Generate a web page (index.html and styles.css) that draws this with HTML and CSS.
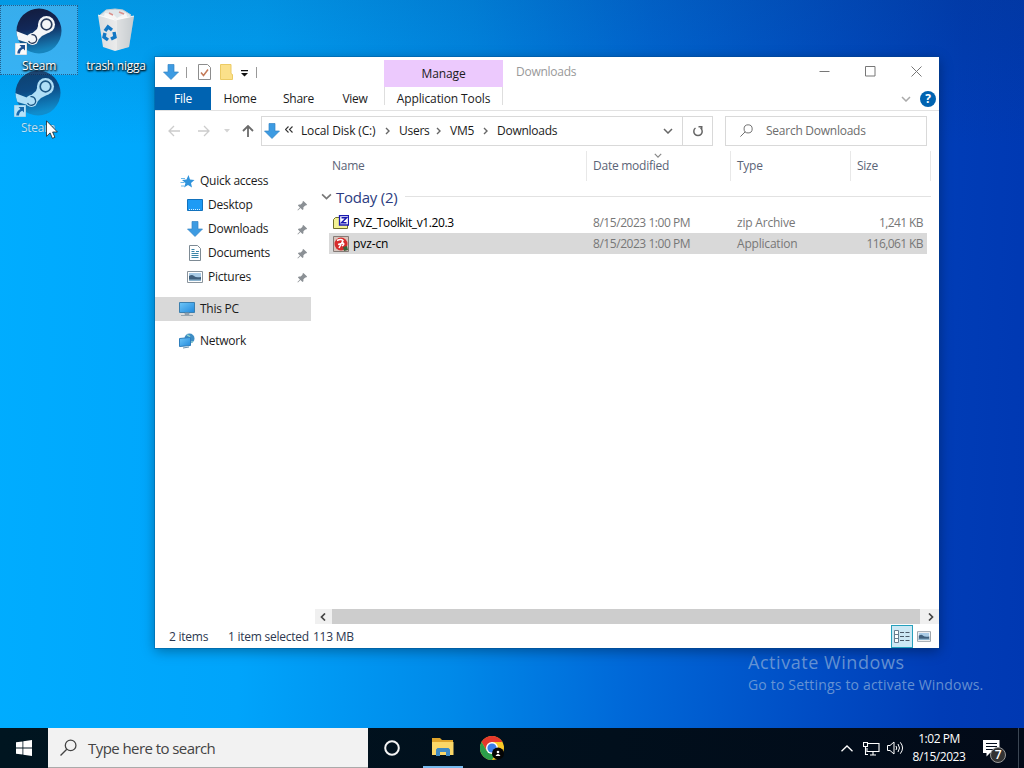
FILE: index.html
```html
<!DOCTYPE html>
<html lang="en">
<head>
    <meta charset="UTF-8">
    <meta name="viewport" content="width=device-width, initial-scale=1.0">
    <title>Desktop</title>
    <link rel="stylesheet" href="styles.css">
</head>
<body>

    <!-- Shared icons -->
    <svg class="defs">
        <defs>
            <linearGradient id="steam-bg" x1="0" y1="0" x2="0.2" y2="1">
                <stop offset="0" stop-color="#131a3a"/>
                <stop offset="0.5" stop-color="#12295a"/>
                <stop offset="1" stop-color="#1684bd"/>
            </linearGradient>
            <linearGradient id="blue" x1="0" y1="0" x2="1" y2="1">
                <stop offset="0" stop-color="#6ec6f8"/>
                <stop offset="1" stop-color="#2289dc"/>
            </linearGradient>
            <linearGradient id="bin" x1="0" y1="0" x2="1" y2="0">
                <stop offset="0" stop-color="#d9dcdf"/>
                <stop offset="0.55" stop-color="#ececec"/>
                <stop offset="1" stop-color="#bcc3c9"/>
            </linearGradient>
        </defs>
        <symbol id="steam" viewBox="0 0 48 48">
            <clipPath id="disc"><circle cx="24" cy="24" r="22.500"/></clipPath>
            <circle cx="24" cy="24" r="22.500" fill="url(#steam-bg)"/>
            <g clip-path="url(#disc)">
                <path d="M0 23.500L14 29l8-7 2-6 11 9-8 4-5 5-5 3L0 32z" fill="#f4f6f8"/>
                <circle cx="31.500" cy="17.500" r="8.500" fill="#f4f6f8"/>
                <circle cx="17.500" cy="32" r="6" fill="#f4f6f8"/>
                <circle cx="31.500" cy="17.500" r="5.300" fill="none" stroke="#2a3c5c" stroke-width="1.700"/>
                <path d="M13.500 34a4.300 4.300 0 1 0 3-6.300" fill="none" stroke="#2a3c5c" stroke-width="1.300"/>
            </g>
        </symbol>
        <symbol id="shortcut" viewBox="0 0 12 12">
            <path d="M0 0h12v12H0z" fill="#fbfbfb" stroke="#9ab" stroke-width=".6"/>
            <path d="M4.500 2H10v5.500L8.300 5.700Q5 7 5 10.500H2.300Q2.300 6 6.400 3.900z" fill="#20508f"/>
        </symbol>
        <symbol id="down" viewBox="0 0 16 16">
            <path d="M5 .5h6V8h4.500L8 15.500.5 8H5z" fill="#3d9be2" stroke="#3584c4" stroke-width=".7"/>
        </symbol>
        <symbol id="pin" viewBox="0 0 12 12">
            <path d="M7 1l4 4-1 1h-1L7 8v2L6 11 3.800 8.700 1 11.500l-.5-.5 2.700-2.800L1 6l1-1h2l2-2V2z" fill="#8b9095"/>
        </symbol>
        <symbol id="picture" viewBox="0 0 16 12">
            <path d="M.5.5h15v11H.5z" fill="#fff" stroke="#8a949c"/>
            <path d="M2 2h12v8H2z" fill="#a9cbe6"/>
            <path d="M2 5q3-2 5 0t7 1v4H2z" fill="#3f5f7c"/>
            <path d="M2 8.500h12V10H2z" fill="#8db4cf"/>
        </symbol>
        <symbol id="chevron" viewBox="0 0 10 6">
            <path d="M1 1l4 4 4-4" fill="none" stroke="currentColor" stroke-width="1.500"/>
        </symbol>
        <symbol id="glass" viewBox="0 0 16 16">
            <circle cx="10" cy="6" r="5" fill="none" stroke="currentColor" stroke-width="1.200"/>
            <path d="M6.400 9.600L.5 15.500" stroke="currentColor" stroke-width="1.200"/>
        </symbol>
    </svg>

    <section class="desktop">

        <div class="shortcut selected">
            <div class="picture">
                <svg width="48" height="48"><use href="#steam"/></svg>
                <svg class="link" width="12" height="12"><use href="#shortcut"/></svg>
            </div>
            <p>Steam</p>
        </div>

        <div class="shortcut trash">
            <div class="picture">
                <svg width="48" height="48" viewBox="0 0 48 48">
                    <path d="M7 9L14 3l9-1 8 1 8 5-4 6H10z" fill="#dfe6ea" stroke="#c3ccd2"/>
                    <path d="M13 6l8 1 4 4 9-5 2 6H11z" fill="#f6f6f6"/>
                    <path d="M17 6l4 2M27 5l5 2" stroke="#d9918d" stroke-width="1.500"/>
                    <path d="M6 8l17 5 19-4-5 31-14 4-12-4z" fill="url(#bin)"/>
                    <path d="M25 13l17-4-5 31-12 3z" fill="#cfd3d6" opacity=".5"/>
                    <path d="M6 8l17 5 19-4" fill="none" stroke="#fff" stroke-width=".8"/>
                    <g fill="none" stroke="#1478c4" stroke-width="3.400">
                        <path d="M13 24l3-4 4 3"/>
                        <path d="M22 25l1 5-4 2"/>
                        <path d="M16 33l-4-3 1-4"/>
                    </g>
                </svg>
            </div>
            <p>trash nigga</p>
        </div>

        <div class="shortcut ghost">
            <div class="picture">
                <svg width="48" height="48"><use href="#steam"/></svg>
                <svg class="link" width="12" height="12"><use href="#shortcut"/></svg>
            </div>
            <p>Steam</p>
        </div>

        <div class="watermark">
            <h2>Activate Windows</h2>
            <p>Go to Settings to activate Windows.</p>
        </div>

        <div class="window">

            <div class="ribbon">
                <div class="left">
                    <div class="quick">
                        <svg width="16" height="16"><use href="#down"/></svg>
                        <i class="sep"></i>
                        <svg class="check" width="13" height="16" viewBox="0 0 13 16">
                            <path d="M.5.5h9l3 3v12H.5z" fill="#fff" stroke="#8d8d8d"/>
                            <path d="M3 8.500l2.500 3L10 5.500" fill="none" stroke="#c47a58" stroke-width="1.500"/>
                        </svg>
                        <svg class="folder" width="13" height="16" viewBox="0 0 13 16">
                            <path d="M.5.5H11v9l1.500 1v5H.5z" fill="#fbe08a" stroke="#eccb64"/>
                        </svg>
                        <svg class="more" width="7" height="7" viewBox="0 0 7 7"><path d="M0 0h7v1.300H0zM0 3h7L3.500 6.500z" fill="#111"/></svg>
                        <i class="sep"></i>
                    </div>
                    <ul class="tabs">
                        <li class="file">File</li>
                        <li class="home">Home</li>
                        <li class="share">Share</li>
                        <li class="view">View</li>
                    </ul>
                </div>
                <div class="manage">
                    <p class="top">Manage</p>
                    <p class="bottom">Application Tools</p>
                </div>
                <p class="title">Downloads</p>
                <div class="right">
                    <div class="controls">
                        <svg width="11" height="11" viewBox="0 0 11 11"><path d="M.5 5.500h10" stroke="#777"/></svg>
                        <svg width="11" height="11" viewBox="0 0 11 11"><path d="M.5.5h9.500v9.500H.5z" fill="none" stroke="#777"/></svg>
                        <svg width="11" height="11" viewBox="0 0 11 11"><path d="M.5.5l10 10M10.500.5l-10 10" stroke="#777"/></svg>
                    </div>
                    <div class="help">
                        <svg width="10" height="6"><use href="#chevron"/></svg>
                        <span>?</span>
                    </div>
                </div>
            </div>

            <div class="nav">
                <div class="arrows">
                    <svg width="12" height="12" viewBox="0 0 12 12"><path d="M12 6H1M6 1L1 6l5 5" fill="none" stroke="#ccc" stroke-width="1.300"/></svg>
                    <svg width="12" height="12" viewBox="0 0 12 12"><path d="M0 6h11M6 1l5 5-5 5" fill="none" stroke="#ccc" stroke-width="1.300"/></svg>
                    <svg class="small" width="6" height="4" viewBox="0 0 6 4"><path d="M0 0l3 3.500L6 0z" fill="#d4d4d4"/></svg>
                    <svg width="12" height="12" viewBox="0 0 12 12"><path d="M6 12V1M1 6l5-5 5 5" fill="none" stroke="#6b6b6b" stroke-width="1.800"/></svg>
                </div>
                <div class="address">
                    <svg width="16" height="16"><use href="#down"/></svg>
                    <svg class="double" width="8" height="7" viewBox="0 0 8 7"><path d="M3.500.5l-3 3 3 3M7.500.5l-3 3 3 3" fill="none" stroke="#333" stroke-width="1.100"/></svg>
                    <span class="disk">Local Disk (C:)</span>
                    <svg class="next" width="5" height="8" viewBox="0 0 5 8"><path d="M1 1l3 3-3 3" fill="none" stroke="#666" stroke-width="1.400"/></svg>
                    <span class="users">Users</span>
                    <svg class="next" width="5" height="8" viewBox="0 0 5 8"><path d="M1 1l3 3-3 3" fill="none" stroke="#666" stroke-width="1.400"/></svg>
                    <span class="vm">VM5</span>
                    <svg class="next" width="5" height="8" viewBox="0 0 5 8"><path d="M1 1l3 3-3 3" fill="none" stroke="#666" stroke-width="1.400"/></svg>
                    <span class="here">Downloads</span>
                    <svg class="drop" width="10" height="6"><use href="#chevron"/></svg>
                    <div class="refresh">
                        <svg width="12" height="12" viewBox="0 0 12 12"><path d="M8.500 3A4.200 4.200 0 1 1 3.500 3M1.500 1.800h4M2.300 1v4" fill="none" stroke="#666" stroke-width="1.500"/></svg>
                    </div>
                </div>
                <div class="search">
                    <svg width="13" height="13"><use href="#glass" width="13" height="13"/></svg>
                    <span>Search Downloads</span>
                </div>
            </div>

            <div class="content">
                <ul class="side">
                    <li>
                        <svg width="16" height="16" viewBox="0 0 16 16"><path d="M9.500 2L11 6.500l4.500.5-3.500 3 1 4.500-4-2.500-4 2.500 1.500-4.500L3 7l4.500-.5z" fill="#2f93dc"/><path d="M2 5.500h4M1.500 9.500h4M2 13h3" stroke="#6cb8ea"/></svg>
                        <span>Quick access</span>
                    </li>
                    <li class="sub">
                        <svg width="16" height="16" viewBox="0 0 16 16"><path d="M.5 2.500h15v11H.5z" fill="#1d9bf5" stroke="#1272bd"/><path d="M2 12.500h12" stroke="#d8efff" stroke-dasharray="1 1"/></svg>
                        <span>Desktop</span>
                        <svg class="pin" width="11" height="11"><use href="#pin"/></svg>
                    </li>
                    <li class="sub">
                        <svg width="16" height="16"><use href="#down"/></svg>
                        <span>Downloads</span>
                        <svg class="pin" width="11" height="11"><use href="#pin"/></svg>
                    </li>
                    <li class="sub">
                        <svg width="16" height="16" viewBox="0 0 16 16"><path d="M2.500.5h8l3 3v12h-11z" fill="#fff" stroke="#7d8a94"/><path d="M4.500 4.500h3M4.500 6.500h3M4.500 8.500h7M4.500 10.500h7M4.500 12.500h7M9 6.500h3" stroke="#3c85a8"/></svg>
                        <span>Documents</span>
                        <svg class="pin" width="11" height="11"><use href="#pin"/></svg>
                    </li>
                    <li class="sub">
                        <svg width="16" height="12"><use href="#picture"/></svg>
                        <span>Pictures</span>
                        <svg class="pin" width="11" height="11"><use href="#pin"/></svg>
                    </li>
                    <li class="gap active">
                        <svg width="16" height="16" viewBox="0 0 16 16"><path d="M.5 1.500h15v10H.5z" fill="url(#blue)" stroke="#3c7fae"/><path d="M6 12h4v1.500H6zM2 14.500h12" fill="#9ab" stroke="#8797a3" stroke-width=".8"/></svg>
                        <span>This PC</span>
                    </li>
                    <li class="gap">
                        <svg width="16" height="16" viewBox="0 0 16 16"><circle cx="10.500" cy="5.500" r="5" fill="#3e8dc4"/><path d="M8 2q4 1 2 4t4 3" fill="none" stroke="#8ed0ce" stroke-width="1.500"/><path d="M.5 5.500l11-1v8l-11 1z" fill="url(#blue)" stroke="#2f7ebc"/><path d="M4 15l6-1" stroke="#6b8fa8"/></svg>
                        <span>Network</span>
                    </li>
                </ul>

                <div class="files">
                    <div class="head">
                        <p>Name</p>
                        <p>Date modified <svg width="8" height="5"><use href="#chevron"/></svg></p>
                        <p>Type</p>
                        <p>Size</p>
                    </div>
                    <div class="group">
                        <svg width="11" height="7"><use href="#chevron"/></svg>
                        <span>Today (2)</span>
                    </div>
                    <div class="row">
                        <svg width="16" height="16" viewBox="0 0 16 16">
                            <path d="M.5 4.500l2-2h4l1 2h7v9H.5z" fill="#f4f294" stroke="#6f6f2c"/>
                            <path d="M6.500.5h9v9.500h-9z" fill="#fff" stroke="#1a1ab0" stroke-width="1.300"/>
                            <path d="M8.500 2.700h5l-5 5h5" fill="none" stroke="#1a1ab0" stroke-width="1.500"/>
                        </svg>
                        <span class="name">PvZ_Toolkit_v1.20.3</span>
                        <span class="date">8/15/2023 1:00 PM</span>
                        <span class="type">zip Archive</span>
                        <span class="size">1,241 KB</span>
                    </div>
                    <div class="row selected">
                        <svg width="16" height="16" viewBox="0 0 16 16">
                            <path d="M.5.5h15v15H.5z" fill="#d9c3bb" stroke="#857b77"/>
                            <circle cx="8" cy="8" r="6.500" fill="#d62b2b"/>
                            <path d="M4 4.500q4-2 6 0L6 12M5 8.500l5-1.500q2 1-1 3" fill="none" stroke="#fff" stroke-width="1.500"/>
                            <path d="M10 11l4-1 1 4-4 1z" fill="#37633a"/>
                        </svg>
                        <span class="name">pvz-cn</span>
                        <span class="date">8/15/2023 1:00 PM</span>
                        <span class="type">Application</span>
                        <span class="size">116,061 KB</span>
                    </div>
                    <div class="scroll">
                        <svg width="6" height="8" viewBox="0 0 6 8"><path d="M5 .5L1.500 4 5 7.500" fill="none" stroke="#444" stroke-width="1.700"/></svg>
                        <div class="thumb"></div>
                        <svg width="6" height="8" viewBox="0 0 6 8"><path d="M1 .5L4.500 4 1 7.500" fill="none" stroke="#444" stroke-width="1.700"/></svg>
                    </div>
                </div>
            </div>

            <div class="status">
                <span class="items">2 items</span>
                <span class="count">1 item selected</span>
                <span class="total">113 MB</span>
                <div class="details">
                    <svg width="16" height="13" viewBox="0 0 16 13"><path d="M.5.5h4v12h-4zM.5 4.500h4M.5 8.500h4" fill="#fff" stroke="#6b7e91"/><path d="M6 2.500h10M6 6.500h10M6 10.500h10" stroke="#4b5a68" stroke-dasharray="4 1.500"/></svg>
                </div>
                <svg class="large" width="14" height="11"><use href="#picture" width="14" height="11"/></svg>
            </div>
        </div>

        <svg class="cursor" width="12" height="19" viewBox="0 0 12 19">
            <path d="M.5.8v15.500l3.600-3.400 2.300 5.400 2.500-1-2.300-5.300h4.800z" fill="#fff" stroke="#222" stroke-width=".8"/>
        </svg>
    </section>

    <section class="taskbar">
        <div class="start">
            <svg width="16" height="16" viewBox="0 0 16 16"><path d="M0 2.300l6.500-.9v6.200H0zM7.300 1.200L16 0v7.600H7.300zM0 8.400h6.500v6.200L0 13.700zM7.300 8.400H16V16l-8.700-1.200z" fill="#fff"/></svg>
        </div>
        <div class="find">
            <svg width="17" height="17"><use href="#glass"/></svg>
            <span>Type here to search</span>
        </div>
        <div class="app">
            <svg width="16" height="16" viewBox="0 0 16 16"><circle cx="8" cy="8" r="6.800" fill="none" stroke="#f4f4f4" stroke-width="2"/></svg>
        </div>
        <div class="app open">
            <svg width="22" height="18" viewBox="0 0 22 18">
                <path d="M0 0h8l2 2h11v5H0z" fill="#e0a52c"/>
                <path d="M0 4h21.500v13H0z" fill="#fbd768"/>
                <path d="M4 18v-6.500L5.500 10h11l1.500 1.500V18h-4v-4H8v4z" fill="#3f8ac4"/>
            </svg>
        </div>
        <div class="app chrome">
            <svg width="24" height="24" viewBox="0 0 24 24">
                <circle cx="12" cy="12" r="12" fill="#fbc926"/>
                <path d="M12 6h10.400a12 12 0 0 0-20.800 0L7 15z" fill="#e5382c"/>
                <path d="M1.600 6A12 12 0 0 0 12 24l5.200-9H6.800z" fill="#2c9e4b"/>
                <circle cx="12" cy="12" r="6" fill="#fff"/>
                <circle cx="12" cy="12" r="4.600" fill="#3a7ee8"/>
                <circle cx="18" cy="17.500" r="6" fill="#050505"/>
                <circle cx="18" cy="16" r="1.300" fill="#fff"/>
                <path d="M15.500 20q2.500-4 5 0z" fill="#fff"/>
            </svg>
        </div>
        <div class="tray">
            <svg width="12" height="7" viewBox="0 0 12 7"><path d="M.5 6.300L6 1l5.500 5.300" fill="none" stroke="#fff" stroke-width="1.300"/></svg>
            <svg class="net" width="17" height="15" viewBox="0 0 17 15"><path d="M5 2.500h11v8H4V7M10 10.500V14M7 14h6M.5 1.500h4v4h-4zM2.500 5.500v8H5" fill="none" stroke="#fff" stroke-width="1.100"/></svg>
            <svg class="sound" width="17" height="14" viewBox="0 0 17 14"><path d="M.5 4.500h2.500L7 1v12L3 9.500H.5z" fill="none" stroke="#fff"/><path d="M9 5q1.500 2 0 4M11 3q3 4 0 8M13.300 1.300q4.500 5.700 0 11.400" fill="none" stroke="#fff"/></svg>
            <div class="clock">
                <p>1:02 PM</p>
                <p>8/15/2023</p>
            </div>
            <div class="notes">
                <svg width="17" height="17" viewBox="0 0 17 17"><path d="M0 0h16.500v13H7l-3.500 3.500V13H0z" fill="#fff"/><path d="M3 3.500h11M3 6.500h11M3 9.500h7" stroke="#020c1c"/></svg>
                <span>7</span>
            </div>
        </div>
    </section>

</body>
</html>
```
FILE: styles.css
```css
* {
    margin: 0;
    padding: 0;
    box-sizing: border-box;
}

body {
    width: 1024px;
    height: 768px;
    overflow: hidden;
    font-family: "Open Sans", "Noto Sans", sans-serif;
    font-size: 12px;
    letter-spacing: -.25px;
    color: #1b1b1b;
}

ul {
    list-style: none;
}

svg {
    flex: none;
    display: block;
}

span, p, li {
    white-space: nowrap;
}

.defs {
    position: absolute;
    width: 0;
    height: 0;
}

/* Desktop */

.desktop {
    position: relative;
    height: 728px;
    background: linear-gradient(rgba(10, 50, 90, .16), transparent 20%),
        linear-gradient(92deg, #00adff 0%, #00a4fb 25%, #008ae9 45%, #0068d8 62%, #004cc4 80%, #003cb6 92%, #0038b2 100%);
}

.shortcut {
    position: absolute;
    left: 0;
    top: 5px;
    width: 78px;
    height: 70px;
    padding-top: 2px;
    color: white;
    text-align: center;
    text-shadow: 0 1px 2px #000, 1px 1px 2px #000;
}

.shortcut .picture {
    position: relative;
    width: 48px;
    height: 48px;
    margin: 0 auto;
}

.shortcut .link {
    position: absolute;
    left: 0;
    bottom: 0;
}

.shortcut p {
    margin-top: 3px;
    line-height: 16px;
}

.shortcut.selected {
    background-color: rgba(130, 200, 245, .42);
    border: dotted 1px #245f8d;
    padding-top: 1px;
}

.shortcut.trash {
    left: 77px;
}

.shortcut.ghost {
    left: -1px;
    top: 67px;
    opacity: .72;
    text-shadow: 0 0 1px #235;
}

.cursor {
    position: absolute;
    left: 46px;
    top: 120px;
}

.watermark {
    position: absolute;
    left: 748px;
    top: 650px;
    color: #7ea4d8;
    opacity: .8;
}

.watermark h2 {
    font-size: 18px;
    font-weight: normal;
    line-height: 24px;
    letter-spacing: .55px;
}

.watermark p {
    font-size: 14px;
    line-height: 21px;
    letter-spacing: .17px;
}

/* Explorer window */

.window {
    position: absolute;
    left: 155px;
    top: 57px;
    width: 784px;
    height: 591px;
    display: flex;
    flex-direction: column;
    background-color: white;
    box-shadow: 0 0 0 1px rgba(0, 70, 130, .3), 0 3px 12px rgba(0, 0, 0, .35);
}

.ribbon {
    height: 54px;
    display: flex;
    border-bottom: solid 1px #e2e2e2;
}

.ribbon .left {
    width: 229px;
}

.quick {
    height: 30px;
    display: flex;
    align-items: center;
    padding-left: 8px;
}

.quick .sep {
    width: 1px;
    height: 11px;
    margin-left: 7px;
    background-color: #999;
}

.quick .check {
    margin-left: 11px;
}

.quick .folder {
    margin-left: 9px;
}

.quick .more {
    margin: 3px 1px 0 8px;
}

.tabs {
    display: flex;
    height: 23px;
    line-height: 24px;
}

.tabs li {
    text-align: center;
}

.tabs .file {
    width: 56px;
    background-color: #0063b1;
    color: white;
}

.tabs .home {
    width: 58px;
}

.tabs .share {
    width: 59px;
}

.tabs .view {
    width: 54px;
}

.manage {
    width: 119px;
    margin-top: 3px;
    text-align: center;
    letter-spacing: -.12px;
}

.manage .top {
    height: 27px;
    line-height: 28px;
    background-color: #ecc9fd;
}

.manage .bottom {
    height: 18px;
    line-height: 24px;
    border: solid #dedede;
    border-width: 0 1px;
}

.ribbon .title {
    margin-left: 13px;
    line-height: 30px;
    color: #999;
}

.ribbon .right {
    margin-left: auto;
}

.controls {
    display: flex;
    gap: 35px;
    height: 29px;
    align-items: center;
    padding-right: 17px;
}

.help {
    display: flex;
    align-items: center;
    justify-content: flex-end;
    gap: 9px;
    height: 25px;
    padding-right: 3px;
    color: #aaa;
}

.help span {
    width: 16px;
    height: 16px;
    line-height: 16px;
    border-radius: 50%;
    background-color: #0063b1;
    color: white;
    font-weight: bold;
    text-align: center;
}

.nav {
    height: 40px;
    display: flex;
    padding-top: 5px;
}

.arrows {
    width: 106px;
    height: 30px;
    display: flex;
    align-items: center;
    gap: 18px;
    padding-left: 13px;
}

.arrows .small {
    margin: 0 -6px 0 -4px;
}

.address {
    width: 452px;
    height: 30px;
    display: flex;
    align-items: center;
    border: solid 1px #d9d9d9;
    padding-left: 2px;
}

.address span {
    margin-top: -1px;
}

.address .double {
    margin: 0 8px 3px 5px;
}

.address .disk {
    width: 84px;
    letter-spacing: -.15px;
}

.address .users {
    width: 37px;
}

.address .vm {
    width: 33px;
}

.address .next {
    margin-right: 9px;
}

.address .drop {
    margin-left: auto;
    margin-right: 9px;
    color: #666;
}

.refresh {
    width: 30px;
    height: 28px;
    display: flex;
    align-items: center;
    justify-content: center;
    border-left: solid 1px #d9d9d9;
}

.refresh svg {
    transform: scaleX(-1);
}

.search {
    width: 202px;
    height: 30px;
    display: flex;
    align-items: center;
    gap: 13px;
    margin-left: 12px;
    padding: 0 0 1px 14px;
    border: solid 1px #d9d9d9;
    color: #6d6d6d;
}

.content {
    flex: 1;
    display: flex;
}

.side {
    width: 156px;
    margin-right: 4px;
    padding-top: 18px;
}

.side li {
    height: 24px;
    display: flex;
    align-items: center;
    gap: 5px;
    padding: 0 3px 0 24px;
}

.side span {
    margin-top: -2px;
}

.side .sub {
    padding-left: 32px;
}

.side .gap {
    margin-top: 8px;
}

.side .active {
    background-color: #d9d9d9;
}

.side .pin {
    margin-left: auto;
}

.files {
    flex: 1;
    display: flex;
    flex-direction: column;
}

.head {
    display: grid;
    grid-template-columns: 255px 144px 120px 80px;
    height: 30px;
    padding-left: 17px;
    color: #5b6477;
}

.head p {
    position: relative;
    line-height: 30px;
    border-right: solid 1px #e8e8e8;
}

.head p + p {
    padding-left: 6px;
}

.head svg {
    position: absolute;
    left: 67px;
    top: 2px;
    color: #888;
}

.group {
    display: flex;
    align-items: center;
    height: 31px;
    padding: 0 8px 0 6px;
    font-size: 15px;
    color: #2c3c80;
}

.group svg {
    margin-right: 4px;
    color: #777;
}

.group::after {
    content: "";
    flex: 1;
    height: 1px;
    margin-left: 8px;
    background-color: #e2e2e2;
}

.row {
    height: 21px;
    display: grid;
    grid-template-columns: 20px 240px 144px 110px 1fr;
    align-items: center;
    margin: 0 12px 0 14px;
    padding: 0 4px;
    color: #777;
}

.row .name {
    color: #000;
    letter-spacing: -.38px;
}

.row .date {
    letter-spacing: -.45px;
}

.row .type {
    letter-spacing: -.2px;
}

.row .size {
    text-align: right;
    letter-spacing: -.6px;
}

.row.selected {
    background-color: #d9d9d9;
}

.row.selected .name {
    letter-spacing: -.1px;
}

.scroll {
    height: 15px;
    display: flex;
    align-items: center;
    gap: 6px;
    margin-top: auto;
    padding: 0 5px;
    background-color: #f0f0f0;
}

.scroll .thumb {
    flex: 1;
    height: 15px;
    margin-right: 2px;
    background-color: #cdcdcd;
}

.status {
    height: 24px;
    display: flex;
    align-items: center;
    padding: 0 8px 0 14px;
    color: #2c3850;
}

.status .items {
    width: 59px;
}

.status .count {
    width: 85px;
}

.status .details {
    width: 22px;
    height: 23px;
    display: flex;
    align-items: center;
    justify-content: center;
    margin-left: auto;
    margin-right: 4px;
    border: solid 1px #26a0bc;
    background-color: #cce8f4;
}

/* Taskbar */

.taskbar {
    height: 40px;
    display: flex;
    background: linear-gradient(90deg, #001520, #010f1c 60%, #020a18);
    color: white;
}

.start {
    width: 48px;
    display: flex;
    align-items: center;
    justify-content: center;
}

.find {
    width: 320px;
    display: flex;
    align-items: center;
    gap: 11px;
    padding-left: 12px;
    background-color: #f2f2f2;
    border-bottom: solid 1px #aaa;
    color: #444;
    font-size: 15px;
    letter-spacing: -.57px;
}

.app {
    width: 48px;
    display: flex;
    align-items: center;
    justify-content: center;
}

.app.open {
    width: 40px;
    margin-left: 7px;
    border-bottom: solid 2px #76b9ed;
}

.app.chrome {
    margin-left: 5px;
}

.tray {
    display: flex;
    align-items: center;
    width: 183px;
    margin-left: auto;
}

.tray .net {
    margin-left: 10px;
}

.tray .sound {
    margin-left: 7px;
}

.clock {
    width: 62px;
    margin-left: 4px;
    text-align: center;
    line-height: 18px;
    letter-spacing: -.45px;
}

.notes {
    position: relative;
    width: 36px;
    height: 40px;
    margin-left: 13px;
    padding-top: 12px;
    border-right: solid 1px #3b4653;
}

.notes span {
    position: absolute;
    left: 7px;
    top: 19px;
    width: 16px;
    height: 16px;
    line-height: 14px;
    border: solid 1px #999;
    border-radius: 50%;
    background-color: #333;
    text-align: center;
    font-weight: 600;
}
```
